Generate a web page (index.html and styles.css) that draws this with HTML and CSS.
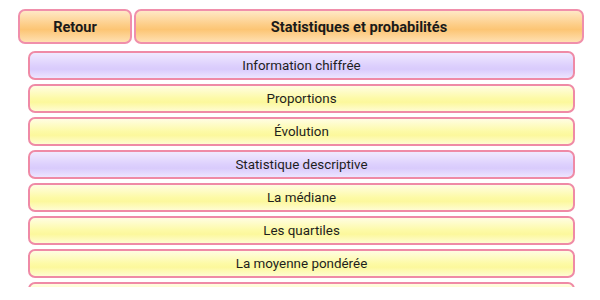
FILE: index.html
```html
<!DOCTYPE html>
<html lang="fr">
<head>
  <meta charset="UTF-8"/>
  <title>Statistiques et probabilités</title>
  <link rel="stylesheet" href="styles.css">
</head>
<body>
  <header class="topbar">
    <div class="btn back">Retour</div>
    <div class="btn title">Statistiques et probabilités</div>
  </header>
  <main class="list">
    <div class="row section">Information chiffrée</div>
    <div class="row">Proportions</div>
    <div class="row">Évolution</div>
    <div class="row section">Statistique descriptive</div>
    <div class="row">La médiane</div>
    <div class="row">Les quartiles</div>
    <div class="row">La moyenne pondérée</div>
    <div class="row"></div>
  </main>
</body>
</html>
```

FILE: styles.css
```css
*, *::before, *::after { box-sizing: border-box; margin: 0; padding: 0; }
html, body { background: #fff; font-family: Roboto, 'Noto Sans', sans-serif; color: #1e1e1e; }

.topbar { display: flex; gap: 2px; padding: 9px 16px 0 18px; }
.btn {
  height: 35px; display: flex; align-items: center; justify-content: center;
  border: 2px solid #f08fab; border-radius: 7px;
  background: linear-gradient(to bottom, #ffe8c6 0%, #fdcd86 45%, #fcc574 60%, #ffe0b2 100%);
  font-weight: 700; font-size: 14.6px; color: #1a1a1a;
}
.back { width: 114px; }
.title { flex: 1; }

.list {
  display: flex; flex-direction: column; gap: 4px;
  margin-top: 7px; padding: 0 25px 0 28px;
  height: 236px; overflow: hidden;
}
.row {
  flex: none; height: 29px; display: flex; align-items: center; justify-content: center;
  border: 2px solid #ef8aa6; border-radius: 7px;
  background: linear-gradient(to bottom, #fffde2 0%, #fdfaa6 50%, #fcf89c 65%, #fffcd2 100%);
  font-size: 13.4px;
}
.row.section {
  background: linear-gradient(to bottom, #f0e9ff 0%, #ddd0fd 50%, #d9cbfc 65%, #ede5ff 100%);
}
```
